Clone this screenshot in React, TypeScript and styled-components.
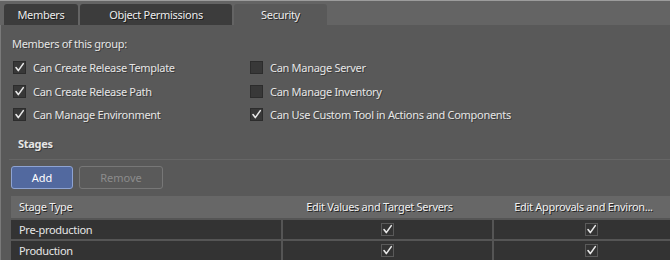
import * as React from 'react';
import styled, { createGlobalStyle } from 'styled-components';

const GlobalStyle = createGlobalStyle`
	html, body {
		margin: 0;
		padding: 0;
		background: #595959;
	}
	body {
		font-family: "Noto Sans", "DejaVu Sans", sans-serif;
		font-size: 11px;
		letter-spacing: -0.3px;
		color: #e6e6e6;
	}
`;

const Window = styled.div`
	width: 670px;
	height: 260px;
	overflow: hidden;
	background: #595959;
	border-top: 1px solid #9c9c9c;
	box-sizing: border-box;
	display: flex;
	flex-direction: column;
`;

const TabStrip = styled.div`
	height: 24px;
	flex: none;
	background: #646464;
	display: flex;
	align-items: flex-end;
	gap: 2px;
	padding-left: 4px;
`;

const Tab = styled.div<{ $active?: boolean, $width: number }>`
	width: ${p => p.$width}px;
	height: 21px;
	border-radius: 3px 3px 0 0;
	background: ${p => p.$active ? '#595959' : '#3c3c3c'};
	display: flex;
	align-items: center;
	justify-content: center;
	color: #ececec;
	text-shadow: 1px 1px 0 rgba(0, 0, 0, 0.6);
`;

const Body = styled.div`
	flex: 1;
	border-left: 1px solid #7a7a7a;
	padding: 11px 0 0 11px;
	display: flex;
	flex-direction: column;
`;

const GroupTitle = styled.div`
	height: 16px;
	line-height: 16px;
	text-shadow: 1px 1px 0 rgba(0, 0, 0, 0.35);
`;

const PermissionGrid = styled.div`
	display: grid;
	grid-template-columns: 237px 1fr;
	grid-auto-rows: 23.5px;
	margin-top: 4px;
	padding-left: 1px;
`;

const CheckRow = styled.label`
	display: flex;
	align-items: center;
	gap: 7px;
	text-shadow: 1px 1px 0 rgba(0, 0, 0, 0.35);
`;

const Box = styled.span<{ $inTable?: boolean }>`
	width: 13px;
	height: 13px;
	box-sizing: border-box;
	flex: none;
	background: ${p => p.$inTable ? '#333333' : '#383838'};
	border: 1px solid ${p => p.$inTable ? '#5a5a5a' : '#2c2c2c'};
	display: inline-flex;
	align-items: center;
	justify-content: center;
`;

const SectionTitle = styled.div`
	margin-top: 9px;
	padding-left: 6px;
	height: 16px;
	line-height: 16px;
	font-weight: bold;
	text-shadow: 1px 1px 0 rgba(0, 0, 0, 0.35);
`;

const Divider = styled.div`
	height: 1px;
	background: #666666;
	margin: 7px 0 0 -3px;
`;

const ButtonBar = styled.div`
	display: flex;
	gap: 6px;
	margin: 6px 0 0 -1px;
`;

const Button = styled.button<{ $primary?: boolean, $width: number }>`
	width: ${p => p.$width}px;
	height: 23px;
	border-radius: 3px;
	font: inherit;
	padding: 0;
	border: 1px solid ${p => p.$primary ? '#8ea3d2' : '#777777'};
	background: ${p => p.$primary ? '#52699f' : '#5a5a5a'};
	color: ${p => p.$primary ? '#ffffff' : '#8c8c8c'};
`;

const Table = styled.div`
	margin: 7px 0 0 -1px;
	display: flex;
	flex-direction: column;
	gap: 2px;
	background: #555555;
	width: 678px;
`;

const HeaderRow = styled.div`
	display: grid;
	grid-template-columns: 270px 211px 1fr;
	height: 22px;
	background: #676767;
	text-shadow: 1px 1px 0 rgba(0, 0, 0, 0.7);
	color: #f0f0f0;
`;

const HeaderCell = styled.div<{ $center?: boolean }>`
	display: flex;
	align-items: center;
	justify-content: ${p => p.$center ? 'center' : 'flex-start'};
	padding-left: ${p => p.$center ? 0 : 8}px;
	${p => p.$center ? 'padding-right: 14px;' : ''}
	white-space: nowrap;
`;

const Row = styled.div`
	display: grid;
	grid-template-columns: 270px 209px 1fr;
	column-gap: 2px;
	height: 19px;
`;

const Cell = styled.div<{ $center?: boolean }>`
	background: #333333;
	display: flex;
	align-items: center;
	justify-content: ${p => p.$center ? 'center' : 'flex-start'};
	padding-left: ${p => p.$center ? 0 : 8}px;
	${p => p.$center ? 'padding-right: 1px;' : ''}
`;

const Check = () => (
	<svg width="11" height="11" viewBox="0 0 11 11">
		<path d="M2 5.6 L4.3 8.6 L9.3 1.6" fill="none" stroke="#e8e8e8" strokeWidth="1.6" strokeLinecap="round" strokeLinejoin="round" />
	</svg>
);

const CheckBox = ({ checked, inTable }: { checked: boolean, inTable?: boolean }) => (
	<Box $inTable={inTable}>{checked && <Check />}</Box>
);

const permissions: [string, boolean][] = [
	['Can Create Release Template', true],
	['Can Manage Server', false],
	['Can Create Release Path', true],
	['Can Manage Inventory', false],
	['Can Manage Environment', true],
	['Can Use Custom Tool in Actions and Components', true],
];

const stages = ['Pre-production', 'Production'];

const App = () => (
	<>
		<GlobalStyle />
		<Window>
			<TabStrip>
				<Tab $width={74}>Members</Tab>
				<Tab $width={152}>Object Permissions</Tab>
				<Tab $width={93} $active>Security</Tab>
			</TabStrip>
			<Body>
				<GroupTitle>Members of this group:</GroupTitle>
				<PermissionGrid>
					{permissions.map(([label, checked]) => (
						<CheckRow key={label}>
							<CheckBox checked={checked} />
							{label}
						</CheckRow>
					))}
				</PermissionGrid>
				<SectionTitle>Stages</SectionTitle>
				<Divider />
				<ButtonBar>
					<Button $primary $width={62}>Add</Button>
					<Button $width={84}>Remove</Button>
				</ButtonBar>
				<Table>
					<HeaderRow>
						<HeaderCell>Stage Type</HeaderCell>
						<HeaderCell $center>Edit Values and Target Servers</HeaderCell>
						<HeaderCell $center>Edit Approvals and Environ...</HeaderCell>
					</HeaderRow>
					{stages.map(stage => (
						<Row key={stage}>
							<Cell>{stage}</Cell>
							<Cell $center><CheckBox checked inTable /></Cell>
							<Cell $center><CheckBox checked inTable /></Cell>
						</Row>
					))}
				</Table>
			</Body>
		</Window>
	</>
);

export default App;
